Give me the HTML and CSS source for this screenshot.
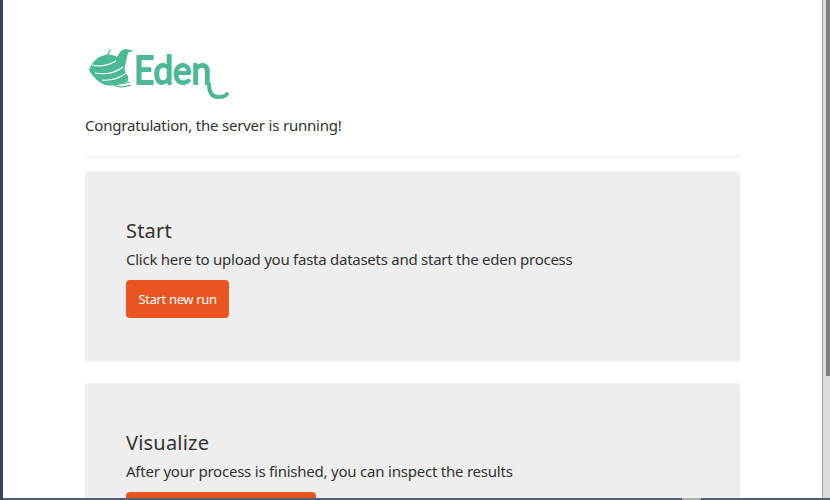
FILE: index.html
```html
<!DOCTYPE html>
<html lang="en">
<head>
<meta charset="utf-8">
<title>Eden</title>
<link rel="stylesheet" href="styles.css">
</head>
<body>
<div class="window">
  <div class="viewport">
    <main class="page">
      <svg class="logo" width="145" height="56" viewBox="0 0 145 56" aria-label="Eden logo">
        <path class="logo-body" d="M4 23 C7 15 12 10 20 8 C25 7 29 8 32 10 C34 6 36 3 40 2 C43 2 45 3 49 4 L44 5 C42 7 42 11 41 15 C40 19 39 22 40 24 C43 28 44 31 43 34 C36 39 27 39 20 38 C13 35 7 29 4 23 Z"/>
        <path class="logo-cut" d="M7 18 C15 20 24 18 31 14 M10 26 C20 28 30 26 38 20 M17 33 C26 34 35 31 43 25"/>
        <path class="logo-thin" d="M23 9 C23 6 24 4 26 3 M29 38 C34 41 40 40 46 38 M33 36 C38 37 42 36 45 35"/>
        <text class="logo-word" x="49" y="37" textLength="77" lengthAdjust="spacingAndGlyphs">Eden</text>
        <path class="logo-tail" d="M124 37 C124 46 127 50 133 50 C137 50 140 50 142 47"/>
      </svg>
      <p class="lead">Congratulation, the server is running!</p>
      <hr class="rule">
      <section class="card">
        <h2>Start</h2>
        <p>Click here to upload you fasta datasets and start the eden process</p>
        <a class="btn">Start new run</a>
      </section>
      <section class="card">
        <h2>Visualize</h2>
        <p class="tight">After your process is finished, you can inspect the results</p>
        <a class="btn btn-wide"></a>
      </section>
    </main>
    <div class="scrollbar"><div class="thumb"></div></div>
  </div>
  <div class="desktop-edge"><div class="edge-segment"></div></div>
</div>
</body>
</html>
```
FILE: styles.css
```css
html, body { margin: 0; height: 100%; overflow: hidden; }
.window {
  height: 500px;
  box-sizing: border-box;
  border-left: 3px solid #3b4456;
  background: #fff;
  font-family: "Noto Sans", "Open Sans", sans-serif;
  color: #333;
  overflow: hidden;
  display: flex;
  flex-direction: column;
}
.viewport { display: flex; flex: 1; min-height: 0; overflow: hidden; }
.page { width: 819px; flex: none; padding: 47px 0 0 82px; box-sizing: border-box; }
.page > * { width: 655px; }
.logo { display: block; width: 145px; height: 56px; margin-bottom: 12px; }
.logo-body { fill: #4cb897; }
.logo-cut { fill: none; stroke: #fff; stroke-width: 1.1; }
.logo-thin { fill: none; stroke: #4cb897; stroke-width: 1.3; }
.logo-word { font-family: "Lato", sans-serif; font-size: 38px; fill: #4cb897; stroke: #4cb897; stroke-width: 1.8; stroke-linejoin: round; }
.logo-tail { fill: none; stroke: #4cb897; stroke-width: 4; stroke-linecap: round; }
.lead { margin: 0; font-size: 15px; line-height: 20px; letter-spacing: -.2px; }
.rule { border: 0; border-top: 1px solid #eee; margin: 21px 0 14px; }
.card { background: #eee; border-radius: 4px; padding: 47px 41px 44px; box-sizing: border-box; height: 191px; margin-bottom: 21px; }
.card h2 { margin: 0 0 5px; font-size: 20px; line-height: 26px; font-weight: 400; letter-spacing: .2px; }
.card p { margin: 0 0 11px; font-size: 15px; line-height: 20px; letter-spacing: -.26px; }
.card p.tight { letter-spacing: -.22px; }
.btn { display: inline-block; height: 38px; line-height: 38px; padding: 0 12.5px; background: #e95420; color: #fff; border-radius: 4px; font-size: 13px; letter-spacing: -.35px; }
.btn-wide { width: 165px; vertical-align: top; }
.scrollbar { width: 8px; flex: none; background: #dcdcdc; border-left: 1px solid #a8a8a8; box-sizing: border-box; padding-left: 3px; }
.thumb { height: 376px; background: #7e7e7e; }
.desktop-edge { height: 2px; flex: none; background: #4f5d75; }
.edge-segment { width: 19px; height: 2px; margin-left: 679px; background: #a9adb2; }
```
